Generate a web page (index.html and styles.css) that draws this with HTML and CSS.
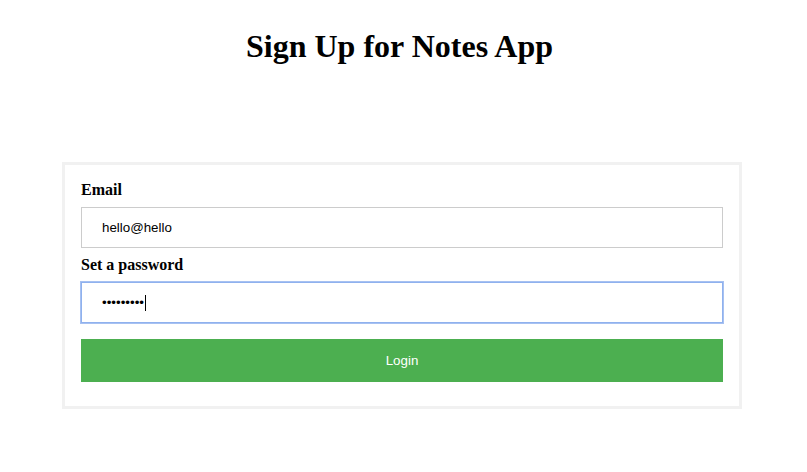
FILE: index.html
```html
<!DOCTYPE html>
<html>
<head>
<meta charset="utf-8">
<title>Sign Up for Notes App</title>
<link rel="stylesheet" href="styles.css">
</head>
<body>
<h1 class="title">Sign Up for Notes App</h1>
<form class="card">
  <label class="label" for="email">Email</label>
  <input class="field" id="email" type="text" value="hello@hello">
  <label class="label" for="pw">Set a password</label>
  <div class="field field-focus" id="pw"><span class="dots">•••••••••</span><span class="caret"></span></div>
  <button class="btn" type="button">Login</button>
</form>
</body>
</html>
```
FILE: styles.css
```css
body {
  margin: 8px;
  font-family: "Liberation Serif", "Times New Roman", serif;
  background: #fff;
  color: #000;
}
.title {
  font-size: 32px;
  font-weight: bold;
  text-align: center;
  margin: 20px 0 0 0;
  line-height: 37px;
  transform: translateX(-4px);
}
.card {
  width: 680px;
  box-sizing: border-box;
  margin: 97px 0 0 54px;
  border: 3px solid #f1f1f1;
  padding: 16px;
}
.label {
  display: block;
  font-weight: bold;
  font-size: 16px;
  line-height: 18px;
}
.field {
  display: flex;
  align-items: center;
  width: 100%;
  box-sizing: border-box;
  height: 41px;
  margin: 8px 0;
  padding: 0 20px;
  border: 1px solid #ccc;
  font-family: "Liberation Sans", Arial, sans-serif;
  font-size: 13.33px;
  color: #000;
  background: #fff;
  outline: none;
}
.field-focus {
  border: 1px solid #8fb1ee;
  box-shadow: 0 0 0 1px #a7c1f1;
}
.dots {
  letter-spacing: 0;
}
.caret {
  display: inline-block;
  width: 1px;
  height: 16px;
  background: #000;
  margin-left: 1px;
}
.btn {
  display: block;
  width: 100%;
  height: 43px;
  margin: 16px 0 8px 0;
  padding: 0 20px;
  border: none;
  background: #4caf50;
  color: #fff;
  font-family: "Liberation Sans", Arial, sans-serif;
  font-size: 13.33px;
}
```
